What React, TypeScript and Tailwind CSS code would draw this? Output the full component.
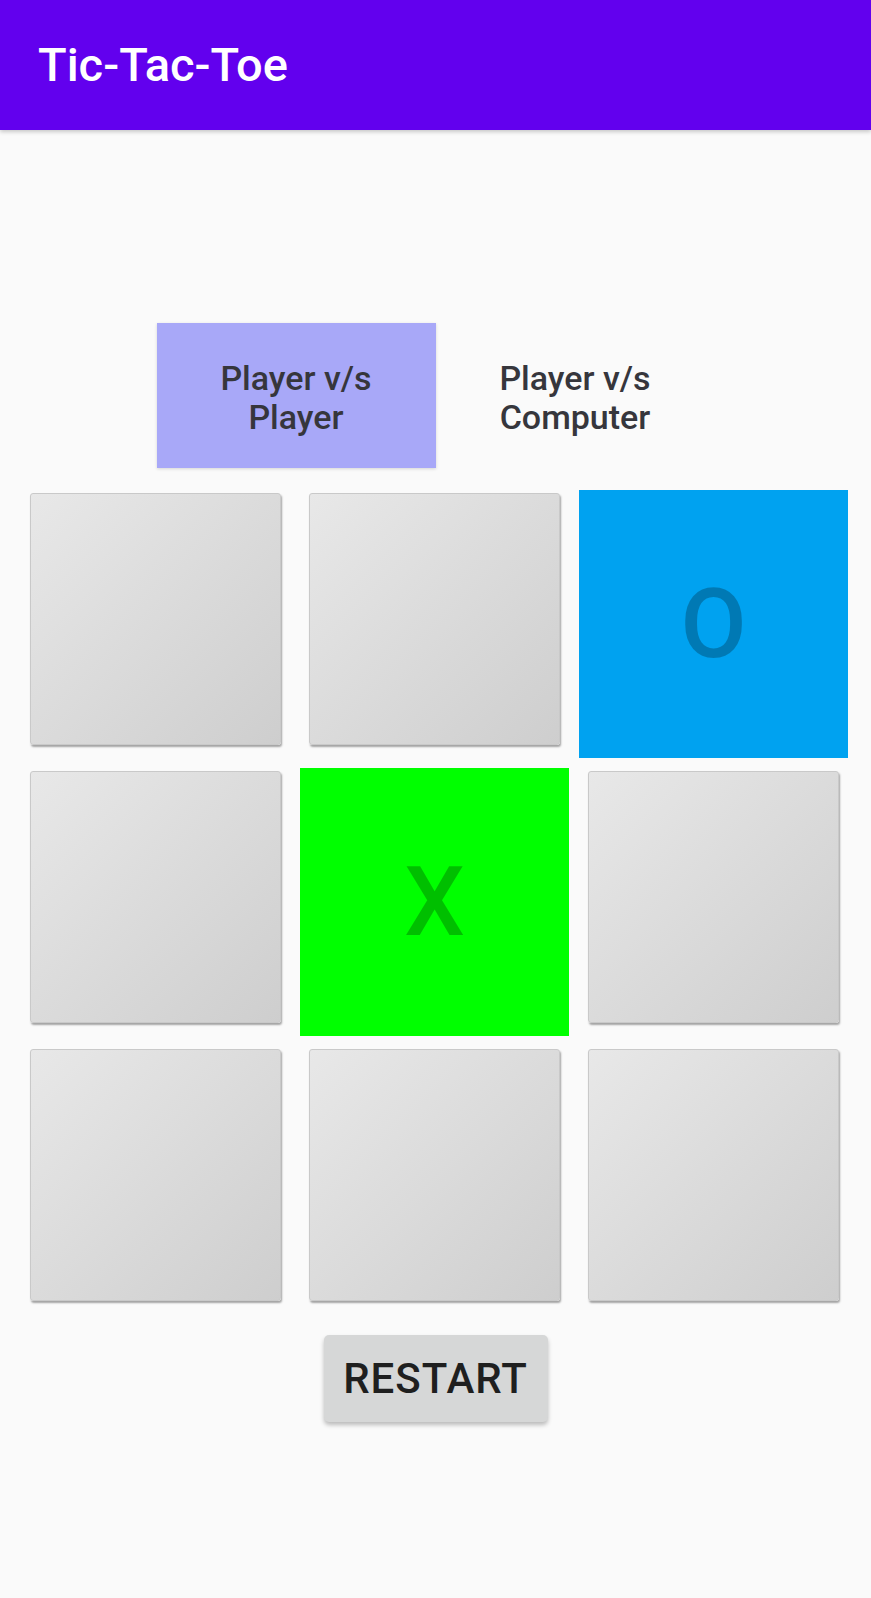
import { useState } from 'react'

type Mark = '' | 'X' | 'O'

const initialBoard: Mark[] = ['', '', 'O', '', 'X', '', '', '', '']

function Cell({ value }: { value: Mark }) {
  if (value === 'X') {
    return (
      <div className="h-[268px] flex items-center justify-center bg-[#00ff00]">
        <span className="text-[96px] leading-none font-medium text-black/25">X</span>
      </div>
    )
  }
  if (value === 'O') {
    return (
      <div className="h-[268px] flex items-center justify-center bg-[#00a2f0]">
        <span className="text-[96px] leading-none font-medium text-black/25">O</span>
      </div>
    )
  }
  // empty cell = raised grey button
  return (
    <div className="h-[268px] px-[9px] pt-[3px] pb-[13px]">
      <button className="w-full h-full rounded-[3px] border border-[#c9c9c9] bg-gradient-to-br from-[#e8e8e8] to-[#cecece] shadow-[1px_2px_2px_rgba(0,0,0,0.35)]" />
    </div>
  )
}

export default function App() {
  const [mode, setMode] = useState<'pvp' | 'pvc'>('pvp')
  const [board] = useState<Mark[]>(initialBoard)

  return (
    <div className="min-h-[1598px] bg-[#fafafa] font-['Roboto','Liberation_Sans',sans-serif]">
      {/* app bar */}
      <div className="h-[130px] bg-[#6200ee] flex items-center pl-[38px] shadow-[0_2px_4px_rgba(0,0,0,0.2)]">
        <h1 className="text-[47px] leading-[56px] font-medium text-white">Tic-Tac-Toe</h1>
      </div>

      {/* mode selector */}
      <div className="mt-[193px] flex justify-center">
        <button
          onClick={() => setMode('pvp')}
          className={`w-[279px] h-[145px] flex items-center justify-center pt-[4px] text-[34px] leading-[39px] font-medium text-[#36363c] ${
            mode === 'pvp' ? 'bg-[#a8a8f8] shadow-[0_1px_3px_rgba(0,0,0,0.15)]' : ''
          }`}
        >
          Player v/s
          <br />
          Player
        </button>
        <button
          onClick={() => setMode('pvc')}
          className={`w-[279px] h-[145px] flex items-center justify-center pt-[4px] text-[34px] leading-[39px] font-medium text-[#36363c] ${
            mode === 'pvc' ? 'bg-[#a8a8f8] shadow-[0_1px_3px_rgba(0,0,0,0.15)]' : ''
          }`}
        >
          Player v/s
          <br />
          Computer
        </button>
      </div>

      {/* board */}
      <div className="mt-[22px] ml-[21px] w-[827px] grid grid-cols-3 gap-[10px]">
        {board.map((v, i) => (
          <Cell key={i} value={v} />
        ))}
      </div>

      {/* restart */}
      <div className="mt-[21px] flex justify-center">
        <button className="w-[224px] h-[87px] rounded-[5px] bg-[#d6d7d7] text-[42px] font-medium tracking-[1px] text-[#1f1f1f] shadow-[0_3px_4px_rgba(0,0,0,0.25)]">
          RESTART
        </button>
      </div>
    </div>
  )
}
